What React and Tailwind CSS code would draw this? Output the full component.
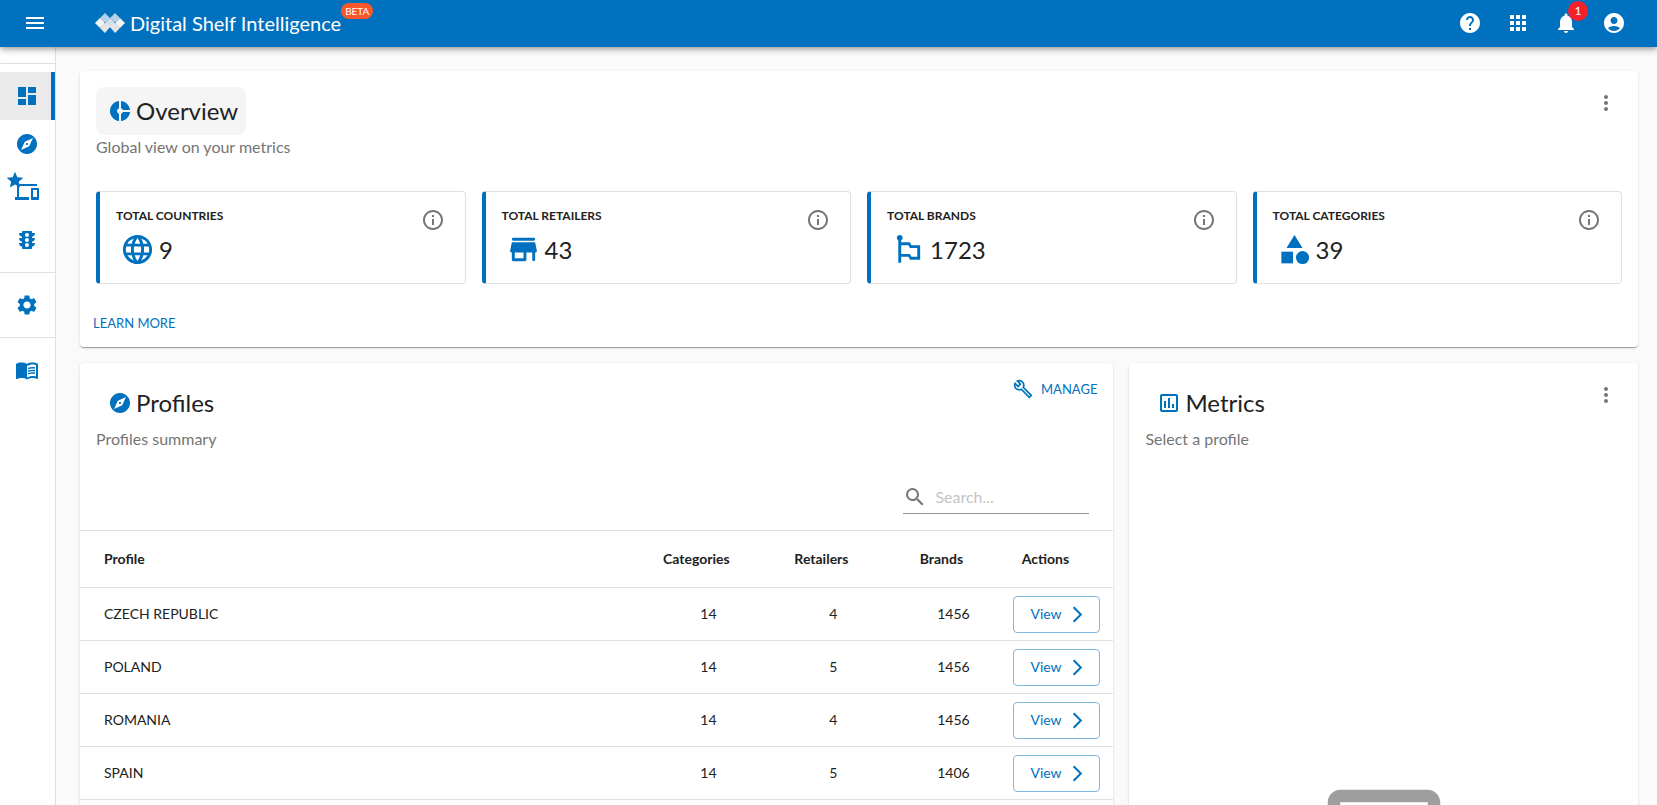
import { useState } from "react";
import {
  MdAccountCircle,
  MdApps,
  MdArrowForwardIos,
  MdCategory,
  MdDashboard,
  MdDevices,
  MdDonutSmall,
  MdEmojiFlags,
  MdExplore,
  MdHelp,
  MdLanguage,
  MdMenu,
  MdMenuBook,
  MdMoreVert,
  MdNotifications,
  MdOutlineAssessment,
  MdOutlineBuild,
  MdOutlineInfo,
  MdSearch,
  MdSettings,
  MdStar,
  MdTraffic,
} from "react-icons/md";

const stats = [
  { label: "Total countries", value: 9, icon: MdLanguage },
  { label: "Total retailers", value: 43, icon: StoreIcon },
  { label: "Total brands", value: 1723, icon: MdEmojiFlags },
  { label: "Total categories", value: 39, icon: MdCategory },
];

const profiles = [
  { name: "CZECH REPUBLIC", categories: 14, retailers: 4, brands: 1456 },
  { name: "POLAND", categories: 14, retailers: 5, brands: 1456 },
  { name: "ROMANIA", categories: 14, retailers: 4, brands: 1456 },
  { name: "SPAIN", categories: 14, retailers: 5, brands: 1406 },
];

function Logo() {
  return (
    <svg viewBox="0 0 30 20" className="h-5 w-[30px]" aria-hidden="true">
      <path d="M10 0l5 5-5 5-5-5zM20 0l5 5-5 5-5-5z" fill="#b5d2e8" />
      <path d="M5 5l5 5-5 5-5-5z" fill="#f4f4f4" />
      <path d="M15 5l5 5-5 5-5-5z" fill="#d3e1ec" />
      <path d="M25 5l5 5-5 5-5-5z" fill="#f4f4f4" />
      <path d="M10 9l5 5-5 6-5-5zM20 9l5 6-5 5-5-6z" fill="#e4e4e4" />
      <path d="M10 8.600l1 1-1 1-1-1zM20 8.600l1 1-1 1-1-1z" fill="#3d8fca" />
    </svg>
  );
}

function StoreIcon({ size, className }) {
  return (
    <svg viewBox="0 0 24 24" width={size} height={size} fill="currentColor" className={className} aria-hidden="true">
      <path d="M5 6h14c.55 0 1-.45 1-1s-.45-1-1-1H5c-.55 0-1 .45-1 1s.45 1 1 1zm15.160 1.800c-.09-.46-.5-.8-.98-.8H4.820c-.48 0-.89.34-.98.8l-1 5c-.12.62.35 1.200.98 1.200H4v5c0 .55.45 1 1 1h8c.55 0 1-.45 1-1v-5h4v5c0 .55.45 1 1 1s1-.45 1-1v-5h.18c.63 0 1.100-.58.98-1.200l-1-5zM12 18H6v-4h6v4z" />
    </svg>
  );
}

function Card({ className = "", children }) {
  return (
    <section
      className={`rounded bg-white shadow-[0_2px_1px_-1px_rgba(0,0,0,0.2),0_1px_1px_rgba(0,0,0,0.14),0_1px_3px_rgba(0,0,0,0.12)] ${className}`}
    >
      {children}
    </section>
  );
}

function CardTitle({ icon: Icon, title, subtitle, active }) {
  return (
    <div>
      <button
        type="button"
        className={`flex h-12 items-center gap-1 rounded-lg pr-2 pb-px pl-3 text-2xl ${active ? "bg-[#f5f5f5]" : ""}`}
      >
        <Icon size={24} className="text-[#0071be]" />
        {title}
      </button>
      <p className="text-base text-[#757575]">{subtitle}</p>
    </div>
  );
}

function MoreButton() {
  return (
    <button type="button" aria-label="More options" className="flex h-8 w-8 items-center justify-center text-[#757575]">
      <MdMoreVert size={24} />
    </button>
  );
}

function NavItem({ label, active, children }) {
  return (
    <a
      href="#"
      aria-label={label}
      className={`relative flex h-12 items-center pl-[15px] ${active ? "border-r-4 border-[#0071be] bg-[#ebebeb]" : ""}`}
    >
      {children}
    </a>
  );
}

function Header() {
  return (
    <header className="relative z-10 flex h-[47px] shrink-0 items-center bg-[#0071be] pr-[19px] pb-px pl-[11px] text-white shadow-[0_2px_4px_-1px_rgba(0,0,0,0.2),0_4px_5px_rgba(0,0,0,0.14),0_1px_10px_rgba(0,0,0,0.12)]">
      <button type="button" aria-label="Menu" className="flex w-12 justify-center">
        <MdMenu size={24} />
      </button>
      <div className="relative ml-9 flex items-center gap-[5px] pb-px">
        <Logo />
        <h1 className="text-xl leading-6">Digital Shelf Intelligence</h1>
        <span className="absolute -top-2 left-full rounded-full bg-[#f9572b] px-1 text-[10px] leading-4">BETA</span>
      </div>
      <div className="ml-auto flex">
        <button type="button" aria-label="Help" className="flex w-12 justify-center">
          <MdHelp size={24} />
        </button>
        <button type="button" aria-label="Apps" className="flex w-12 justify-center">
          <MdApps size={24} />
        </button>
        <button type="button" aria-label="Notifications" className="relative flex w-12 justify-center">
          <MdNotifications size={24} />
          <span className="absolute -top-2.5 right-0.5 h-5 w-5 rounded-full bg-[#f5222d] text-center text-xs leading-5">
            1
          </span>
        </button>
        <button type="button" aria-label="Account" className="flex w-12 justify-center">
          <MdAccountCircle size={24} />
        </button>
      </div>
    </header>
  );
}

function Sidebar() {
  return (
    <nav className="w-14 shrink-0 border-r border-[#e0e0e0] bg-white pt-4 text-[#0071be]">
      <div className="border-t border-[#e0e0e0] py-2">
        <NavItem label="Dashboard" active>
          <MdDashboard size={24} />
        </NavItem>
        <NavItem label="Profiles">
          <MdExplore size={24} />
        </NavItem>
        <NavItem label="Favourite devices">
          <MdDevices size={24} />
          <MdStar size={20} className="absolute top-0.5 left-[5px]" />
        </NavItem>
        <NavItem label="Status">
          <MdTraffic size={24} />
        </NavItem>
      </div>
      <div className="border-t border-[#e0e0e0] py-2">
        <NavItem label="Settings">
          <MdSettings size={24} />
        </NavItem>
      </div>
      <div className="border-t border-[#e0e0e0] py-2">
        <NavItem label="Documentation">
          <MdMenuBook size={24} />
        </NavItem>
      </div>
    </nav>
  );
}

function StatCard({ label, value, icon: Icon }) {
  return (
    <div className="flex h-[93px] justify-between rounded border border-l-4 border-[#e0e0e0] border-l-[#0071be] pt-4 pr-5 pl-4">
      <div>
        <h3 className="text-xs leading-4 font-bold uppercase">{label}</h3>
        <div className="mt-2 flex items-center gap-1 pl-1 text-2xl">
          <Icon size={35} className="text-[#0071be]" />
          {value}
        </div>
      </div>
      <button type="button" aria-label={`About ${label}`} className="h-6 text-[#757575]">
        <MdOutlineInfo size={24} />
      </button>
    </div>
  );
}

function Overview() {
  return (
    <Card>
      <div className="p-4">
        <div className="flex items-start justify-between">
          <CardTitle icon={MdDonutSmall} title="Overview" subtitle="Global view on your metrics" active />
          <MoreButton />
        </div>
        <div className="mt-8 grid grid-cols-4 gap-4">
          {stats.map((s) => (
            <StatCard key={s.label} {...s} />
          ))}
        </div>
      </div>
      <div className="p-2">
        <button type="button" className="h-[31px] px-[5px] text-[13px] text-[#0071be] uppercase">
          Learn more
        </button>
      </div>
    </Card>
  );
}

function Profiles() {
  const [query, setQuery] = useState("");
  const rows = profiles.filter((p) => p.name.toLowerCase().includes(query.toLowerCase()));

  return (
    <Card className="col-span-2">
      <div className="flex items-start justify-between p-4 pb-0">
        <CardTitle icon={MdExplore} title="Profiles" subtitle="Profiles summary" />
        <button type="button" className="flex items-center gap-2 text-[13px] leading-5 text-[#0071be] uppercase">
          <MdOutlineBuild size={20} />
          Manage
        </button>
      </div>
      <div className="flex justify-end pt-[30px] pr-6 pb-4">
        <label className="flex h-[33px] w-[186px] items-center gap-2 border-b border-[#949494] text-[#757575]">
          <MdSearch size={24} className="shrink-0" />
          <input
            type="text"
            aria-label="Search profiles"
            placeholder="Search..."
            value={query}
            onChange={(e) => setQuery(e.target.value)}
            className="w-full min-w-0 text-base text-[#212121] outline-none placeholder:text-[#c4c4c4]"
          />
        </label>
      </div>
      <table className="w-full table-fixed border-t border-[#e0e0e0] text-center text-sm">
        <thead>
          <tr className="h-[57px] border-b border-[#e0e0e0]">
            <th className="pl-6 text-left">Profile</th>
            <th className="w-[106px] pr-6">Categories</th>
            <th className="w-36 pr-6">Retailers</th>
            <th className="w-24 pr-6">Brands</th>
            <th className="w-28 pr-6">Actions</th>
          </tr>
        </thead>
        <tbody>
          {rows.map((p) => (
            <tr key={p.name} className="h-[53px] border-b border-[#e0e0e0]">
              <td className="pl-6 text-left">{p.name}</td>
              <td>{p.categories}</td>
              <td>{p.retailers}</td>
              <td>{p.brands}</td>
              <td className="pl-3">
                <button
                  type="button"
                  className="flex h-[37px] w-[87px] items-center justify-between rounded border border-[#7fb8de] pr-3 pl-4 text-[#0071be]"
                >
                  View
                  <MdArrowForwardIos size={19} />
                </button>
              </td>
            </tr>
          ))}
        </tbody>
      </table>
    </Card>
  );
}

function Metrics() {
  return (
    <Card className="p-4">
      <div className="flex items-start justify-between">
        <CardTitle icon={MdOutlineAssessment} title="Metrics" subtitle="Select a profile" />
        <MoreButton />
      </div>
      {/* empty state */}
      <div className="flex justify-center py-80">
        <MdOutlineAssessment size={150} className="text-[#9e9e9e]" />
      </div>
    </Card>
  );
}

export default function App() {
  return (
    <div className="flex h-screen flex-col overflow-hidden bg-[#fafafa] font-['Lato',sans-serif] text-[#212121]">
      <Header />
      <div className="flex min-h-0 grow">
        <Sidebar />
        <main className="min-w-0 grow overflow-hidden pt-6 pr-[19px] pl-6">
          <Overview />
          <div className="mt-4 grid grid-cols-3 gap-4">
            <Profiles />
            <Metrics />
          </div>
        </main>
      </div>
    </div>
  );
}
